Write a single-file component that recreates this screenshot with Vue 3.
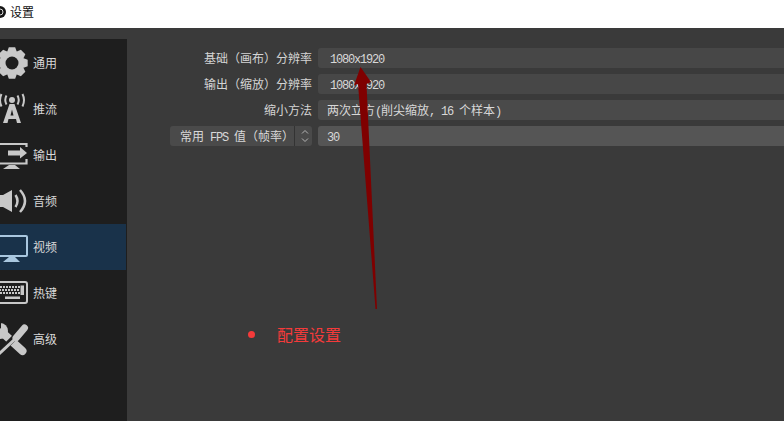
<script setup>
const navItems = [
  { key: 'general', label: '通用' },
  { key: 'stream', label: '推流' },
  { key: 'output', label: '输出' },
  { key: 'audio', label: '音频' },
  { key: 'video', label: '视频', active: true },
  { key: 'hotkeys', label: '热键' },
  { key: 'advanced', label: '高级' },
]

// 8 tooth gear around (16, 16)
function buildGear() {
  const teeth = 8
  const points = []
  for (let i = 0; i < teeth; i++) {
    const a = (i / teeth) * Math.PI * 2
    const corners = [
      [-0.42, 12],
      [-0.2, 16],
      [0.2, 16],
      [0.42, 12],
    ]
    for (const [off, r] of corners) {
      const x = 16 + Math.cos(a + off) * r
      const y = 16 + Math.sin(a + off) * r
      points.push(`${x.toFixed(2)} ${y.toFixed(2)}`)
    }
  }
  return `M${points.join('L')}z`
}

const gearPath = buildGear()
</script>

<template>
  <div class="window">
    <header class="titlebar">
      <svg class="logo" width="12" height="12" viewBox="0 0 12 12">
        <circle cx="6" cy="6" r="6" fill="#151515" />
        <circle cx="6" cy="6" r="3" fill="none" stroke="#ddd" stroke-width="1" />
      </svg>
      <span class="title">设置</span>
    </header>

    <div class="body">
      <nav class="sidebar">
        <div
          v-for="item in navItems"
          :key="item.key"
          class="nav-item"
          :class="{ active: item.active }"
        >
          <svg class="nav-icon" width="32" height="32" viewBox="0 0 32 32">
            <g v-if="item.key === 'general'" fill="#c8c8c8">
              <path :d="gearPath" />
              <circle cx="16" cy="16" r="6.500" fill="#1e1e1e" />
            </g>
            <g v-else-if="item.key === 'stream'" fill="none" stroke="#c8c8c8">
              <circle cx="16" cy="7" r="3" fill="#c8c8c8" stroke="none" />
              <path d="M10.500 2.500q-2.500 4.500 0 9M21.500 2.500q2.500 4.500 0 9" stroke-width="2" />
              <path d="M5.500 1q-3 6 0 12.500M26.500 1q3 6 0 12.500" stroke-width="2" />
              <path d="M13.500 11h5l6.500 19h-4l-1-4h-7.500l-1 4H7z" fill="#c8c8c8" stroke="none" />
              <path d="M14.500 22.500h3l-1.500-6z" fill="#1e1e1e" stroke="none" />
            </g>
            <g v-else-if="item.key === 'output'" fill="#c8c8c8">
              <path d="M4 5H30.500V8M30.500 20V24.500H4" fill="none" stroke="#c8c8c8" stroke-width="2.200" />
              <path d="M12 11.500H24V8L31 14 24 19.500V16.500H12z" />
              <path d="M13 26H19L24 30H7z" />
            </g>
            <g v-else-if="item.key === 'audio'">
              <path d="M-2 10H7L16 5V27L7 22H-2z" fill="#c8c8c8" />
              <path d="M19.500 10q4 6 0 12M24 5q10 11 0 22" fill="none" stroke="#c8c8c8" stroke-width="2.500" />
            </g>
            <g v-else-if="item.key === 'video'" fill="#a9c7df">
              <rect x="-4" y="5" width="35" height="20" rx="1" fill="none" stroke="#a9c7df" stroke-width="2" />
              <path d="M13 26H19L24 31H7z" />
            </g>
            <g v-else-if="item.key === 'hotkeys'" fill="#c8c8c8">
              <rect x="-4" y="5" width="35" height="21" rx="2" fill="none" stroke="#c8c8c8" stroke-width="2" />
              <template v-for="r in 3" :key="r">
                <rect
                  v-for="n in 7"
                  :key="n"
                  :x="3 + (n - 1) * 3 + (r % 2)"
                  :y="6 + r * 3"
                  width="2"
                  height="2"
                />
              </template>
              <rect x="24.500" y="8.500" width="3.500" height="9.500" />
              <rect x="9" y="19.500" width="15" height="2.500" />
            </g>
            <g v-else>
              <circle cx="4" cy="8" r="8" fill="#c8c8c8" />
              <path d="M-2 -2H5V5L1 8H-2z" fill="#1e1e1e" />
              <path d="M9 12 26.500 28" fill="none" stroke="#c8c8c8" stroke-width="8" stroke-linecap="round" />
              <path d="M24 9 3 30" fill="none" stroke="#1e1e1e" stroke-width="6" />
              <path d="M19 16 3 31" fill="none" stroke="#c8c8c8" stroke-width="3" />
              <path d="M28.500 5 20 15" fill="none" stroke="#c8c8c8" stroke-width="7" stroke-linecap="round" />
            </g>
          </svg>
          <span class="nav-label">{{ item.label }}</span>
        </div>
      </nav>

      <main class="content">
        <section class="form">
          <div class="form-row">
            <label class="form-label">基础（画布）分辨率</label>
            <div class="field dim"><span class="latin">1080x1920</span></div>
          </div>
          <div class="form-row">
            <label class="form-label">输出（缩放）分辨率</label>
            <div class="field dim"><span class="latin">1080x1920</span></div>
          </div>
          <div class="form-row">
            <label class="form-label">缩小方法</label>
            <div class="field">两次立方<span class="latin">(</span>削尖缩放<span class="latin">, 16 </span>个样本<span class="latin">)</span></div>
          </div>
          <div class="form-row">
            <div class="combo">
              <span class="combo-text">常用<span class="latin"> FPS </span>值（帧率）</span>
              <span class="spin">
                <svg width="10" height="16" viewBox="0 0 10 16" fill="none" stroke="#b4b4b4" stroke-width="1">
                  <path d="M2 5.500 5 2.500 8 5.500M2 10.500 5 13.500 8 10.500" />
                </svg>
              </span>
            </div>
            <div class="field light"><span class="latin">30</span></div>
          </div>
        </section>

        <p class="note">
          <i class="dot"></i>
          <span>配置设置</span>
        </p>
      </main>
    </div>

    <svg class="arrow" width="784" height="421" viewBox="0 0 784 421">
      <path d="M377 309 375.500 309 358 84 354 85.500 360.500 67 371 82 366.500 84z" fill="#7f0000" />
    </svg>
  </div>
</template>

<style scoped>
.window {
  position: relative;
  width: 784px;
  height: 421px;
  overflow: hidden;
  display: flex;
  flex-direction: column;
  font-family: 'Noto Sans CJK SC', 'Noto Sans', sans-serif;
  font-size: 12px;
  background: #3a3a3a;
}

.titlebar {
  height: 28px;
  flex: none;
  display: flex;
  align-items: center;
  gap: 4px;
  margin-left: -6px;
  padding-bottom: 4px;
  box-sizing: border-box;
  background: #fff;
  color: #111;
}

.title {
  line-height: 16px;
}

.body {
  flex: 1;
  display: flex;
  min-height: 0;
  padding-top: 11px;
}

.sidebar {
  width: 127px;
  flex: none;
  background: #1e1e1e;
  padding-top: 1px;
}

.nav-item {
  height: 46px;
  display: flex;
  align-items: center;
  gap: 5px;
  margin-right: 1px;
  color: #d8d8d8;
}

.nav-item.active {
  background: #19324a;
}

.nav-icon {
  flex: none;
  margin-left: -4px;
  overflow: visible;
}

.nav-label {
  line-height: 16px;
}

.content {
  flex: 1;
  min-width: 0;
  padding-top: 9px;
}

.form {
  display: flex;
  flex-direction: column;
  gap: 6px;
}

.form-row {
  display: flex;
  justify-content: flex-end;
  align-items: center;
  height: 20px;
  gap: 6px;
}

.form-label {
  color: #d4d4d4;
  line-height: 20px;
}

.field {
  width: 466px;
  flex: none;
  height: 20px;
  box-sizing: border-box;
  padding-left: 9px;
  line-height: 20px;
  color: #d8d8d8;
  background: #4a4a4a;
  border-radius: 3px 0 0 3px;
  white-space: pre;
}

.field.dim {
  background: #474747;
  padding-left: 12px;
}

.field.light {
  background: #555;
}

.latin {
  font-family: 'Liberation Mono', monospace;
  font-size: 12px;
  letter-spacing: -1.2px;
  white-space: pre;
}

.combo {
  width: 142px;
  height: 20px;
  flex: none;
  display: flex;
  border-radius: 3px;
  background: #4a4a4a;
  color: #d8d8d8;
  overflow: hidden;
}

.combo-text {
  flex: 1;
  padding-left: 10px;
  line-height: 20px;
  white-space: nowrap;
}

.spin {
  width: 20px;
  flex: none;
  display: flex;
  align-items: center;
  justify-content: center;
  border-left: 1px solid #333;
}

.note {
  margin: 177px 0 0 121px;
  display: flex;
  align-items: center;
  gap: 22px;
  font-size: 16px;
  line-height: 22px;
  color: #f53a3a;
}

.dot {
  width: 7px;
  height: 7px;
  border-radius: 50%;
  background: #f53a3a;
}

.arrow {
  position: absolute;
  left: 0;
  top: 0;
  pointer-events: none;
}
</style>

<style>
body {
  background: #3a3a3a;
}
</style>
